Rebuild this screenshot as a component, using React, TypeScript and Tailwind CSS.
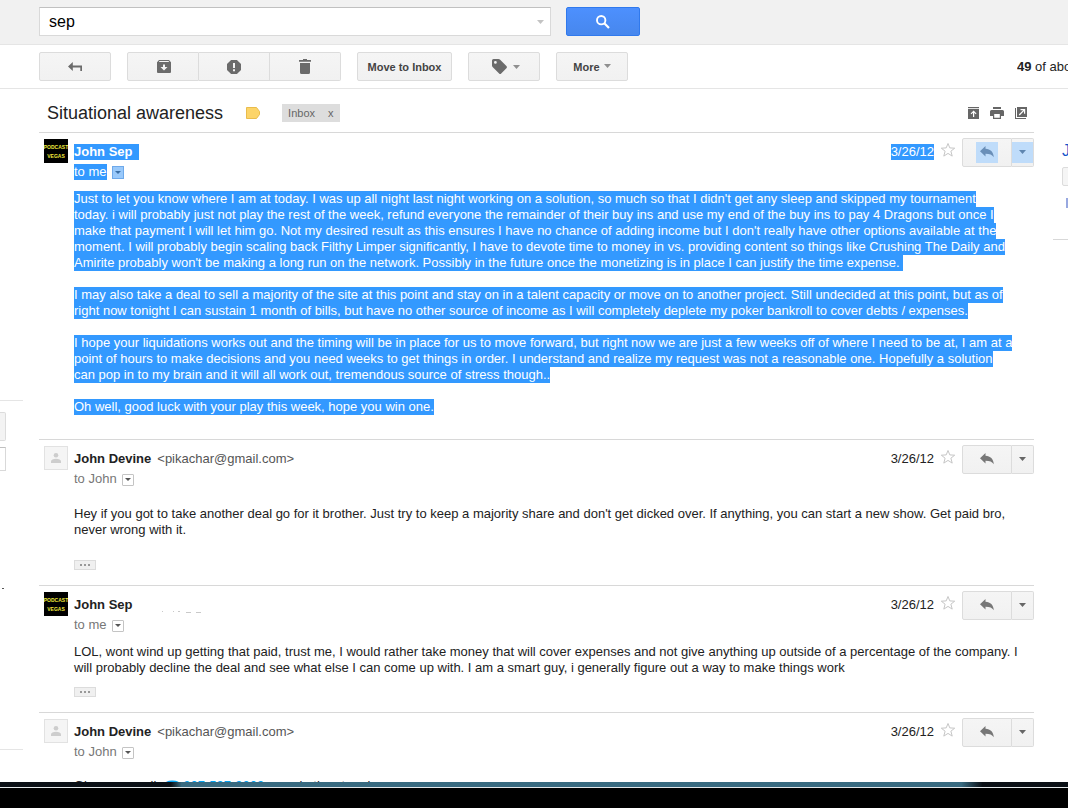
import type { ReactNode } from 'react';

type Message = {
  id: number;
  sender: string;
  email?: string;
  to: string;
  date: string;
  avatar: 'podcast' | 'person';
  selected?: boolean;
  smudge?: boolean;
  body: ReactNode;
  bodyClass: string;
  trimmed?: boolean;
};

const SELECTED_BODY = [
  "Just to let you know where I am at today. I was up all night last night working on a solution, so much so that I didn't get any sleep and skipped my tournament",
  'today. i will probably just not play the rest of the week, refund everyone the remainder of their buy ins and use my end of the buy ins to pay 4 Dragons but once I',
  "make that payment I will let him go. Not my desired result as this ensures I have no chance of adding income but I don't really have other options available at the",
  'moment. I will probably begin scaling back Filthy Limper significantly, I have to devote time to money in vs. providing content so things like Crushing The Daily and',
  "Amirite probably won't be making a long run on the network. Possibly in the future once the monetizing is in place I can justify the time expense.\u00a0",
  '',
  'I may also take a deal to sell a majority of the site at this point and stay on in a talent capacity or move on to another project. Still undecided at this point, but as of',
  'right now tonight I can sustain 1 month of bills, but have no other source of income as I will completely deplete my poker bankroll to cover debts / expenses.',
  '',
  'I hope your liquidations works out and the timing will be in place for us to move forward, but right now we are just a few weeks off of where I need to be at, I am at a',
  'point of hours to make decisions and you need weeks to get things in order. I understand and realize my request was not a reasonable one. Hopefully a solution',
  'can pop in to my brain and it will all work out, tremendous source of stress though..',
  '',
  'Oh well, good luck with your play this week, hope you win one.',
].join('\n');

const MESSAGES: Message[] = [
  {
    id: 1,
    sender: 'John Sep',
    to: 'to me',
    date: '3/26/12',
    avatar: 'podcast',
    selected: true,
    body: SELECTED_BODY,
    bodyClass: 'pt-[9px] pb-6',
  },
  {
    id: 2,
    sender: 'John Devine',
    email: '<pikachar@gmail.com>',
    to: 'to John',
    date: '3/26/12',
    avatar: 'person',
    body: "Hey if you got to take another deal go for it brother. Just try to keep a majority share and don't get dicked over. If anything, you can start a new show. Get paid bro,\nnever wrong with it.",
    bodyClass: 'pt-[17px] pb-[22px]',
    trimmed: true,
  },
  {
    id: 3,
    sender: 'John Sep',
    to: 'to me',
    date: '3/26/12',
    avatar: 'podcast',
    smudge: true,
    body: 'LOL, wont wind up getting that paid, trust me, I would rather take money that will cover expenses and not give anything up outside of a percentage of the company. I\nwill probably decline the deal and see what else I can come up with. I am a smart guy, i generally figure out a way to make things work',
    bodyClass: 'pt-[9px] pb-[11px]',
    trimmed: true,
  },
  {
    id: 4,
    sender: 'John Devine',
    email: '<pikachar@gmail.com>',
    to: 'to John',
    date: '3/26/12',
    avatar: 'person',
    body: (
      <>
        Give me a call{'  '}
        <a href="tel:3075979009" className="text-[#00a2f2]">
          ☎ 307-597-9009
        </a>{' '}
        once in the store is
      </>
    ),
    bodyClass: 'pt-4 pb-5',
  },
];

const BUTTON =
  'flex items-center justify-center h-[29px] border border-[#dcdcdc] bg-linear-to-b from-[#f5f5f5] to-[#f1f1f1] text-[11px] font-bold text-[#444]';

function Caret({ className }: { className: string }) {
  return (
    <svg width="7" height="4" viewBox="0 0 7 4" className={className} fill="currentColor">
      <path d="M0 0h7L3.5 4z" />
    </svg>
  );
}

function ReplyIcon() {
  return (
    <svg width="14" height="12" viewBox="0 0 14 12" fill="currentColor">
      <path d="M5.500 0v2.800c5 .3 7.900 3.200 8.300 8.400-1.600-2.300-4-3.400-8.300-3.400V10.500L0 5.200z" />
    </svg>
  );
}

function Star() {
  return (
    <svg width="16" height="16" viewBox="0 0 16 16" fill="#fff" stroke="#c6c6c6">
      <path d="M8 1.500l1.800 4.400 4.900.3-3.800 3 1.300 4.900L8 11.400l-4.200 2.700 1.300-4.900-3.800-3 4.900-.3z" />
    </svg>
  );
}

function Avatar({ kind }: { kind: Message['avatar'] }) {
  if (kind === 'podcast') {
    return (
      <div className="flex h-6 w-6 shrink-0 flex-col items-center justify-center gap-px overflow-hidden bg-black font-['Liberation_Sans_Narrow','Liberation_Sans',sans-serif] text-[5px] leading-[8px] font-bold text-[#f0ea3c]">
        <span>PODCAST</span>
        <span>VEGAS</span>
      </div>
    );
  }
  return (
    <div className="flex h-6 w-6 shrink-0 items-center justify-center border border-[#e2e2e2] bg-[#f5f5f5]">
      <svg width="10" height="10" viewBox="0 0 10 10" fill="#cdcdcd">
        <circle cx="5" cy="2.300" r="2.300" />
        <path d="M0 10V8.200C0 6.600 2.400 5.700 5 5.700s5 .9 5 2.500V10z" />
      </svg>
    </div>
  );
}

function TopBar() {
  return (
    <header className="flex h-[45px] shrink-0 items-start gap-[15px] border-b border-[#e5e5e5] bg-[#f1f1f1] pt-[7px] pl-[39px]">
      <div className="flex h-[29px] w-[512px] items-center border border-[#d9d9d9] border-t-[#c0c0c0] bg-white pr-[6px]">
        <input
          type="text"
          aria-label="Search mail"
          defaultValue="sep"
          className="min-w-0 flex-1 bg-transparent px-[9px] pt-px text-[16px] text-black outline-none"
        />
        <button type="button" aria-label="Show search options">
          <Caret className="text-[#c3c3c3]" />
        </button>
      </div>
      <button
        type="button"
        aria-label="Search"
        className="flex h-[29px] w-[74px] items-center justify-center rounded-[2px] border border-[#3079ed] bg-linear-to-b from-[#4d90fe] to-[#4787ed]"
      >
        <svg width="14" height="14" viewBox="0 0 14 14" fill="none" stroke="#fff">
          <circle cx="5.200" cy="5.200" r="4.200" strokeWidth="1.900" />
          <path d="M8.300 8.300l4.700 4.700" strokeWidth="2.200" />
        </svg>
      </button>
    </header>
  );
}

function Toolbar() {
  return (
    <div className="flex h-[44px] shrink-0 items-center gap-4 overflow-hidden border-b border-[#e5e5e5] pl-[39px] whitespace-nowrap">
      <button type="button" aria-label="Back" className={`${BUTTON} w-[72px] rounded-[2px]`}>
        <svg width="14" height="10" viewBox="0 0 14 10" fill="#6b6b6b">
          <path d="M0 4.500L4.800 0v3.600H14V9h-1.700V5.400H4.800V9z" />
        </svg>
      </button>
      <div className="flex">
        <button type="button" aria-label="Archive" className={`${BUTTON} w-[72px] rounded-l-[2px] pl-px`}>
          <svg width="14" height="13" viewBox="0 0 14 13" fill="#6b6b6b">
            <path
              fillRule="evenodd"
              d="M2 0h10l2 2.200V12a1 1 0 0 1-1 1H1a1 1 0 0 1-1-1V2.200zM1.800 2h10.400l-.7-1h-9zM6 4.500V7H3.500L7 10.500 10.500 7H8V4.500z"
            />
          </svg>
        </button>
        <button type="button" aria-label="Report spam" className={`${BUTTON} w-[71px] border-l-0`}>
          <svg width="14" height="14" viewBox="0 0 14 14">
            <path d="M4.100 0h5.800L14 4.100v5.800L9.900 14H4.100L0 9.900V4.100z" fill="#6b6b6b" />
            <path d="M6 3h2v5H6zM6 9.300h2v2H6z" fill="#f3f3f3" />
          </svg>
        </button>
        <button type="button" aria-label="Delete" className={`${BUTTON} w-[71px] rounded-r-[2px] border-l-0`}>
          <svg width="12" height="15" viewBox="0 0 12 15" fill="#6b6b6b">
            <path d="M4 0h4v1h4v1.700H0V1h4zM1 4h10v9.500a1.500 1.500 0 0 1-1.500 1.500h-7A1.500 1.500 0 0 1 1 13.500z" />
          </svg>
        </button>
      </div>
      <button type="button" className={`${BUTTON} w-[95px] rounded-[2px] pt-px`}>
        Move to Inbox
      </button>
      <button type="button" aria-label="Labels" className={`${BUTTON} w-[72px] gap-[6px] rounded-[2px] pl-1`}>
        <svg width="15" height="15" viewBox="0 0 15 15" fill="#6b6b6b">
          <path
            fillRule="evenodd"
            d="M0 1.500A1.500 1.500 0 0 1 1.500 0h5a2 2 0 0 1 1.400.6l6.500 6.500a1.500 1.500 0 0 1 0 2.100l-5.200 5.200a1.500 1.500 0 0 1-2.100 0L.6 7.900A2 2 0 0 1 0 6.500zM3.400 2a1.400 1.400 0 1 0 0 2.800 1.400 1.400 0 0 0 0-2.800z"
          />
        </svg>
        <Caret className="text-[#8f8f8f]" />
      </button>
      <button type="button" className={`${BUTTON} w-[72px] gap-1 rounded-[2px] pt-px`}>
        More
        <Caret className="mb-[2px] text-[#8f8f8f]" />
      </button>
      <div className="ml-auto w-[51px] shrink-0 overflow-hidden text-[13px] text-[#222]">
        <b>49</b> of about 87
      </div>
    </div>
  );
}

function SubjectRow() {
  return (
    <div className="flex h-[43px] items-center pt-[6px] pr-[7px] pb-px pl-2">
      <h1 className="text-[18px] leading-6 text-[#222]">Situational awareness</h1>
      <svg width="14" height="12" viewBox="0 0 14 12" className="ml-[23px]">
        <path d="M.5.5h10l3 4v3l-3 4H.5z" fill="#fcd468" stroke="#e9bc4c" />
      </svg>
      <span className="ml-[22px] flex h-[18px] items-center gap-[13px] bg-[#ddd] px-[6px] text-[11px] text-[#666]">
        Inbox
        <button type="button" aria-label="Remove label Inbox">
          x
        </button>
      </span>
      <div className="ml-auto flex items-center gap-[11px] text-[#666]">
        <button type="button" aria-label="Collapse all">
          <svg width="11" height="12" viewBox="0 0 11 12" fill="currentColor">
            <path d="M0 0h11v1.200H0z" />
            <path fillRule="evenodd" d="M0 2h11v10H0zM5 10h1.200V5.800l1.500 1.500.8-.8L5.600 3.400 2.600 6.500l.8.800L5 5.800z" />
          </svg>
        </button>
        <button type="button" aria-label="Print all">
          <svg width="14" height="12" viewBox="0 0 14 12" fill="currentColor">
            <path d="M3 0h8v2H3z" />
            <path fillRule="evenodd" d="M1.500 3h11A1.500 1.500 0 0 1 14 4.500V9h-3v3H3V9H0V4.500A1.500 1.500 0 0 1 1.500 3zM4.200 7v3.800h5.600V7z" />
          </svg>
        </button>
        <button type="button" aria-label="In new window">
          <svg width="12" height="12" viewBox="0 0 12 12" fill="currentColor">
            <path d="M0 1h1v10h10v1H0z" />
            <path fillRule="evenodd" d="M2 0h10v10H2zM5.500 2v1.200h2.600L3.800 7.500l.9.900L9 4.100v2.600h1.200V2z" />
          </svg>
        </button>
      </div>
    </div>
  );
}

function MessageRow({ message }: { message: Message }) {
  const { selected } = message;
  return (
    <article className="flex gap-[6px] border-t border-[#d8d8d8] pl-[5px]">
      <div className="pt-[6px]">
        <Avatar kind={message.avatar} />
      </div>

      <div className="min-w-0 flex-1">
        <div className="flex items-start">
          <div className="min-w-0 flex-1 pt-[9px] text-[13px] leading-5">
            <div className="flex h-5 items-center gap-[6px]">
              <span
                className={
                  selected
                    ? 'bg-[#3399ff] pr-[6px] leading-4 font-bold text-white'
                    : 'leading-4 font-bold text-[#222]'
                }
              >
                {message.sender}
              </span>
              {message.email && <span className="leading-4 text-[#555]">{message.email}</span>}
              {message.smudge && (
                <svg width="40" height="2" viewBox="0 0 40 2" className="mt-[14px] ml-[23px]" fill="#c9c9c9">
                  <path d="M0 0h1v1H0zM11 0h1v1h-1zM16 0h2v1h-2zM24 1h5v1h-5zM34 1h5v1h-5z" />
                </svg>
              )}
            </div>
            <div className="flex h-5 items-center gap-[5px]">
              <span className={selected ? 'bg-[#3399ff] leading-4 text-white' : 'leading-4 text-[#777]'}>
                {message.to}
              </span>
              <button
                type="button"
                aria-label="Show details"
                className={
                  selected
                    ? 'mt-px flex h-[13px] w-3 items-center justify-center border border-[#6ea9ea] bg-[#99c9fb] text-[#3a6ea5]'
                    : 'mt-px flex h-3 w-3 items-center justify-center rounded-[1px] border border-[#c4c4c4] bg-white text-[#555]'
                }
              >
                <svg width="6" height="3" viewBox="0 0 6 3" fill="currentColor">
                  <path d="M0 0h6L3 3z" />
                </svg>
              </button>
            </div>
          </div>

          <div className="flex shrink-0 items-start pt-[5px] text-[13px]">
            <span
              className={
                selected
                  ? 'mt-[6px] bg-[#3399ff] leading-4 text-white'
                  : 'mt-[6px] leading-4 text-[#222]'
              }
            >
              {message.date}
            </span>
            <button type="button" aria-label="Star" className="mt-1 mr-[6px] ml-[6px]">
              <Star />
            </button>
            <button
              type="button"
              aria-label="Reply"
              className={`${BUTTON} w-[50px] rounded-l-[2px]`}
            >
              <span
                className={
                  selected
                    ? 'mb-px flex h-[21px] w-[22px] items-center justify-center bg-[#bfdcfa] text-[#6a8fb8]'
                    : 'mb-px flex h-[21px] w-[22px] items-center justify-center text-[#777]'
                }
              >
                <ReplyIcon />
              </span>
            </button>
            <button
              type="button"
              aria-label="More reply options"
              className={`${BUTTON} w-[22px] rounded-r-[2px] border-l-0`}
            >
              <span
                className={
                  selected
                    ? 'mb-px flex h-[21px] w-[21px] items-center justify-center bg-[#bfdcfa] text-[#5f86b0]'
                    : 'mb-px flex h-[21px] w-[21px] items-center justify-center text-[#666]'
                }
              >
                <Caret className="" />
              </span>
            </button>
          </div>
        </div>

        <div className={`text-[13px] leading-4 whitespace-pre text-[#222] ${message.bodyClass}`}>
          <span className={selected ? 'bg-[#3399ff] pb-px text-white' : ''}>{message.body}</span>
        </div>

        {message.trimmed && (
          <button
            type="button"
            aria-label="Show trimmed content"
            className="mb-[15px] flex h-[10px] w-[22px] items-center justify-center gap-[2px] border border-[#dcdcdc] bg-[#f0f0f0]"
          >
            <i className="h-[2px] w-[2px] bg-[#999]" />
            <i className="h-[2px] w-[2px] bg-[#999]" />
            <i className="h-[2px] w-[2px] bg-[#999]" />
          </button>
        )}
      </div>
    </article>
  );
}

// Cut-off edge of the navigation and chat column
function LeftEdge() {
  return (
    <aside className="w-[39px] shrink-0 pt-[311px]">
      <div className="mb-[11px] w-[23px] border-t border-[#e5e5e5]" />
      <div className="h-[29px] w-[6px] rounded-r-[2px] border border-l-0 border-[#dcdcdc] bg-[#f3f3f3]" />
      <div className="mt-[6px] h-6 w-[6px] border border-l-0 border-[#d9d9d9] border-t-[#c0c0c0]" />
      <div className="mt-[117px] ml-[2px] h-px w-[2px] bg-[#555]" />
      <div className="mt-[160px] w-[23px] border-t border-[#e5e5e5]" />
    </aside>
  );
}

// Cut-off edge of the people panel
function RightEdge() {
  return (
    <aside className="w-[34px] shrink-0 overflow-hidden pt-[54px] pl-[19px]">
      <div className="pl-[9px]">
        <a href="#person" className="block text-[16px] leading-4 text-[#15c]">
          John
        </a>
        <div className="mt-2 h-[19px] w-10 rounded-[2px] border border-[#dcdcdc] bg-[#f5f5f5]" />
        <div className="mt-3 ml-1 h-[10px] w-10 bg-[#98a8e0]" />
      </div>
      <div className="mt-[31px] border-t border-[#d8d8d8]" />
    </aside>
  );
}

export default function App() {
  return (
    <div className="flex h-screen flex-col overflow-hidden bg-white font-['Liberation_Sans',Arial,sans-serif]">
      <TopBar />
      <Toolbar />
      <div className="flex min-h-0 flex-1 overflow-hidden">
        <LeftEdge />
        <main className="min-w-0 flex-1">
          <SubjectRow />
          {MESSAGES.map((message) => (
            <MessageRow key={message.id} message={message} />
          ))}
        </main>
        <RightEdge />
      </div>
      <footer className="h-[26px] shrink-0 bg-black">
        <div className="h-[5px] bg-[linear-gradient(to_right,#0a0f15_16%,#386a80_17%,#386a80_90%,#0a0f15_92%)]" />
        <div className="h-px bg-[#e4e8ea]" />
      </footer>
    </div>
  );
}
